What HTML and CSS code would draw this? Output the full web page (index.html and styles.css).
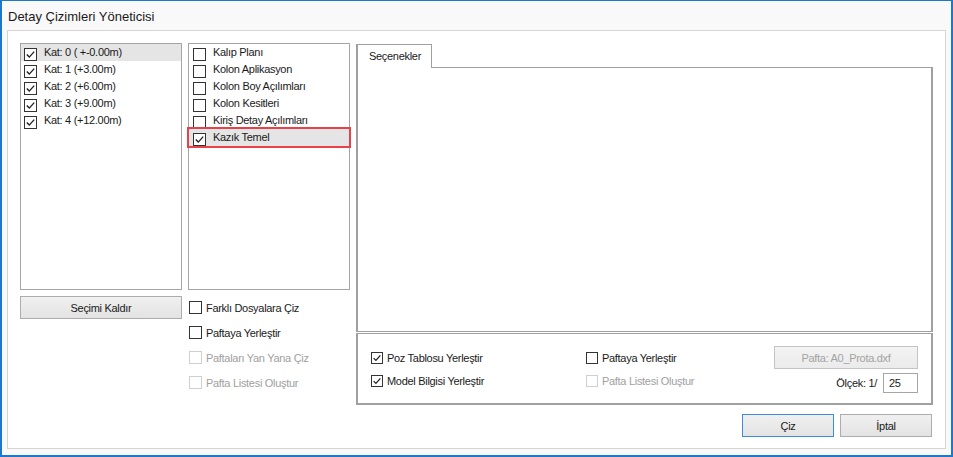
FILE: index.html
```html
<!DOCTYPE html>
<html lang="tr">
<head>
    <meta charset="UTF-8">
    <title>Detay Çizimleri Yöneticisi</title>
    <link rel="stylesheet" href="styles.css">
</head>
<body>
    <div class="window">
        <div class="titlebar">Detay Çizimleri Yöneticisi</div>

        <div class="content">
            <div class="main">
                <!-- floors -->
                <div class="col">
                    <div class="list list-floors">
                        <div class="row selected"><span class="cb checked"><svg viewBox="0 0 11 11"><path d="M1.8 5.6 L4.3 8.1 L9.2 2.6"/></svg></span>Kat: 0 ( +-0.00m)</div>
                        <div class="row"><span class="cb checked"><svg viewBox="0 0 11 11"><path d="M1.8 5.6 L4.3 8.1 L9.2 2.6"/></svg></span>Kat: 1 (+3.00m)</div>
                        <div class="row"><span class="cb checked"><svg viewBox="0 0 11 11"><path d="M1.8 5.6 L4.3 8.1 L9.2 2.6"/></svg></span>Kat: 2 (+6.00m)</div>
                        <div class="row"><span class="cb checked"><svg viewBox="0 0 11 11"><path d="M1.8 5.6 L4.3 8.1 L9.2 2.6"/></svg></span>Kat: 3 (+9.00m)</div>
                        <div class="row"><span class="cb checked"><svg viewBox="0 0 11 11"><path d="M1.8 5.6 L4.3 8.1 L9.2 2.6"/></svg></span>Kat: 4 (+12.00m)</div>
                    </div>
                    <button class="btn btn-wide">Seçimi Kaldır</button>
                </div>

                <!-- drawing types -->
                <div class="col">
                    <div class="list list-drawings">
                        <div class="row"><span class="cb"></span>Kalıp Planı</div>
                        <div class="row"><span class="cb"></span>Kolon Aplikasyon</div>
                        <div class="row"><span class="cb"></span>Kolon Boy Açılımları</div>
                        <div class="row"><span class="cb"></span>Kolon Kesitleri</div>
                        <div class="row"><span class="cb"></span>Kiriş Detay Açılımları</div>
                        <div class="row marked"><span class="cb checked"><svg viewBox="0 0 11 11"><path d="M1.8 5.6 L4.3 8.1 L9.2 2.6"/></svg></span>Kazık Temel</div>
                    </div>
                    <div class="opts">
                        <div class="opt"><span class="cb"></span>Farklı Dosyalara Çiz</div>
                        <div class="opt"><span class="cb"></span>Paftaya Yerleştir</div>
                        <div class="opt disabled"><span class="cb"></span>Paftaları Yan Yana Çiz</div>
                        <div class="opt disabled"><span class="cb"></span>Pafta Listesi Oluştur</div>
                    </div>
                </div>

                <!-- options -->
                <div class="col-right">
                    <div class="tabs">
                        <div class="tab">Seçenekler</div>
                    </div>
                    <div class="tab-page"></div>
                    <div class="settings">
                        <div class="opt-s first"><span class="cb checked"><svg viewBox="0 0 11 11"><path d="M1.8 5.6 L4.3 8.1 L9.2 2.6"/></svg></span>Poz Tablosu Yerleştir</div>
                        <div class="opt-s first"><span class="cb"></span>Paftaya Yerleştir</div>
                        <button class="btn btn-file" disabled>Pafta: A0_Prota.dxf</button>
                        <div class="opt-s second"><span class="cb checked"><svg viewBox="0 0 11 11"><path d="M1.8 5.6 L4.3 8.1 L9.2 2.6"/></svg></span>Model Bilgisi Yerleştir</div>
                        <div class="opt-s second disabled"><span class="cb"></span>Pafta Listesi Oluştur</div>
                        <div class="scale">
                            <span>Ölçek: 1/</span>
                            <div class="textbox">25</div>
                        </div>
                    </div>
                </div>
            </div>

            <div class="actions">
                <button class="btn btn-act btn-primary">Çiz</button>
                <button class="btn btn-act">İptal</button>
            </div>
        </div>
    </div>
</body>
</html>
```

FILE: styles.css
```css
body {
    margin: 0;
    font-family: "Liberation Sans", Arial, sans-serif;
    font-size: 11px;
    letter-spacing: -0.3px;
    color: #1a1a1a;
}

.window {
    width: 953px;
    height: 457px;
    box-sizing: border-box;
    border: 2px solid #1b78cc;
    border-top-width: 1px;
    background: #f9f9f9;
}

.titlebar {
    height: 29px;
    padding-left: 6px;
    font-size: 13px;
    letter-spacing: 0;
    line-height: 31px;
}

.content {
    margin: 0 5px;
    height: 419px;
    box-sizing: border-box;
    border: 1px solid #d5d5d5;
    background: #fff;
    padding: 12px 12px 0;
}

.main {
    display: flex;
    gap: 6px;
    height: 362px;
}

.col {
    width: 162px;
    display: flex;
    flex-direction: column;
}

.list {
    height: 247px;
    box-sizing: border-box;
    border: 1px solid #a5a5a5;
}

.row {
    height: 17px;
    display: flex;
    align-items: flex-start;
    padding-left: 3px;
    line-height: 17px;
    white-space: nowrap;
}

.list-drawings .row {
    padding-left: 4px;
}

.row.selected {
    background: #e5e5e5;
}

.row.marked {
    background: #e5e5e5;
    outline: 2px solid #e8414a;
}

.cb {
    width: 13px;
    height: 13px;
    box-sizing: border-box;
    border: 1px solid #333;
    background: #fff;
    margin-top: 4px;
    margin-right: 7px;
    flex: none;
}

.cb svg {
    display: block;
    width: 11px;
    height: 11px;
}

.cb svg path {
    fill: none;
    stroke: #222;
    stroke-width: 1.4;
}

.btn {
    height: 23px;
    box-sizing: border-box;
    border: 1px solid #adadad;
    background: linear-gradient(#f0f0f0, #e3e3e3);
    font: inherit;
    letter-spacing: inherit;
    color: #1a1a1a;
    padding: 0;
}

.btn-wide {
    margin-top: 6px;
    width: 162px;
}

.opts {
    padding-top: 5px;
}

.opt {
    height: 25px;
    display: flex;
    align-items: center;
    white-space: nowrap;
}

.opt .cb {
    margin: 0 4px 0 1px;
}

.disabled {
    color: #a0a0a0;
}

.disabled .cb {
    border-color: #cfcfcf;
}

.col-right {
    width: 577px;
    display: flex;
    flex-direction: column;
}

.tabs {
    height: 24px;
    padding-top: 1px;
    box-sizing: border-box;
    display: flex;
}

.tab {
    width: 76px;
    height: 24px;
    box-sizing: border-box;
    border: 1px solid #a0a0a0;
    border-left-width: 2px;
    border-bottom: none;
    background: #fff;
    padding-left: 11px;
    line-height: 22px;
    position: relative;
    z-index: 1;
}

.tab-page {
    flex: 1;
    border: 1px solid #a0a0a0;
    border-left-width: 2px;
    border-right-width: 2px;
    margin-bottom: 1px;
}

.settings {
    height: 72px;
    box-sizing: border-box;
    border: 1px solid #a0a0a0;
    border-width: 1px 2px 2px 2px;
    padding: 12px 13px 0 13px;
    display: grid;
    grid-template-columns: 215px 1fr auto;
    grid-template-rows: 23px 20px;
    row-gap: 4px;
}

.opt-s {
    display: flex;
    align-items: center;
    height: 13px;
    white-space: nowrap;
}

.opt-s .cb {
    width: 12px;
    height: 12px;
    margin: 0 4px 0 0;
}

.opt-s .cb svg {
    width: 10px;
    height: 10px;
}

.opt-s.first {
    margin-top: 5px;
}

.opt-s.second {
    margin-top: 1px;
}

.btn-file {
    width: 144px;
    color: #a3a3a3;
    border-color: #c4c4c4;
    background: linear-gradient(#f3f3f3, #ebebeb);
}

.scale {
    display: flex;
    align-items: center;
    justify-content: flex-end;
    gap: 6px;
}

.textbox {
    width: 35px;
    height: 20px;
    box-sizing: border-box;
    border: 1px solid #a6a6a6;
    padding-left: 5px;
    line-height: 18px;
}

.actions {
    display: flex;
    justify-content: flex-end;
    gap: 6px;
    margin-top: 9px;
    padding-right: 1px;
}

.btn-act {
    width: 92px;
}

.btn-primary {
    border-color: #3c8de0;
}
```
